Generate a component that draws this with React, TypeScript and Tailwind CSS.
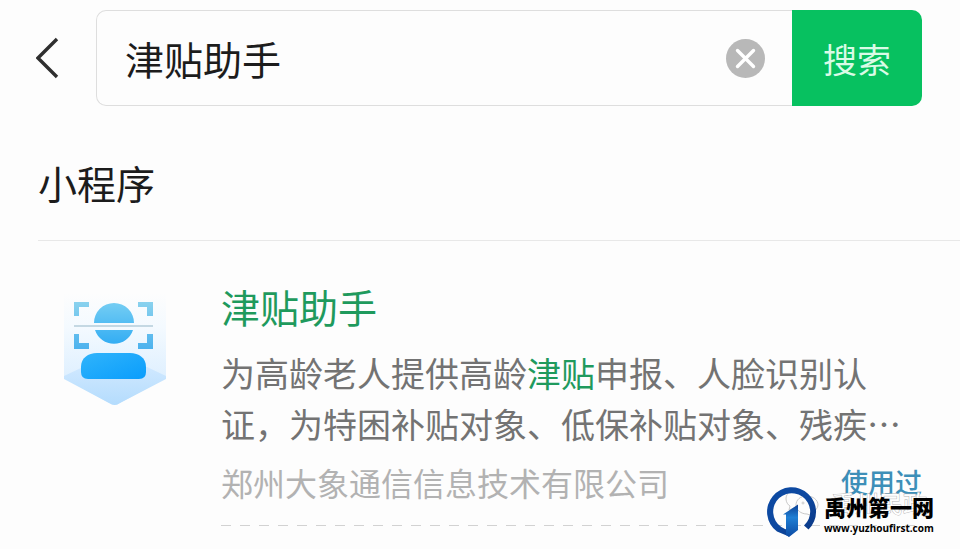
const SearchBar = () => {
  return (
    <form className="flex items-center pl-[36px] pr-[38px] pt-[10px]" onSubmit={(e) => e.preventDefault()}>
      <button type="button" aria-label="返回" className="w-[60px] shrink-0">
        <svg width="24" height="42" viewBox="0 0 24 42" fill="none" stroke="#2f2f2f" strokeWidth="3.4">
          <path d="M21 2 L2 21 L21 40" />
        </svg>
      </button>
      <div className="flex h-24 min-w-0 flex-1 items-center rounded-l-[10px] border border-r-0 border-[#dedede] pl-7 pr-[27px]">
        <input
          type="text"
          aria-label="搜索内容"
          defaultValue="津贴助手"
          className="h-16 min-w-0 flex-1 bg-transparent text-[39px] text-[#1c1c1c] outline-none"
        />
        <button type="button" aria-label="清除" className="shrink-0">
          <svg width="39" height="39" viewBox="0 0 39 39">
            <circle cx="19.5" cy="19.5" r="19.5" fill="#b8b8b8" />
            <path d="M11.5 11.5 L27.5 27.5 M27.5 11.5 L11.5 27.5" stroke="#fff" strokeWidth="3.4" strokeLinecap="round" />
          </svg>
        </button>
      </div>
      <button type="submit" className="h-24 w-[130px] shrink-0 rounded-r-[10px] bg-[#07c160] text-[34px] text-[#d9fbe6]">
        搜索
      </button>
    </form>
  );
};

const FaceScanIcon = () => (
  <svg width="104" height="114" viewBox="0 0 104 114" className="shrink-0" aria-hidden="true">
    <defs>
      <linearGradient id="panel" x1="0" y1="0" x2="0" y2="1">
        <stop offset="0" stopColor="#fdfdfd" />
        <stop offset="0.3" stopColor="#f4faff" />
        <stop offset="1" stopColor="#d3eafe" />
      </linearGradient>
      <linearGradient id="base" x1="0" y1="0" x2="0" y2="1">
        <stop offset="0" stopColor="#cfe8ff" />
        <stop offset="1" stopColor="#b4dcfd" />
      </linearGradient>
      <linearGradient id="head" x1="0" y1="0" x2="0" y2="1">
        <stop offset="0" stopColor="#74cdf3" />
        <stop offset="1" stopColor="#33adf3" />
      </linearGradient>
      <linearGradient id="corner" gradientUnits="userSpaceOnUse" x1="0" y1="9" x2="0" y2="56">
        <stop offset="0" stopColor="#8ad2ee" />
        <stop offset="1" stopColor="#4cb2ee" />
      </linearGradient>
      <linearGradient id="body" x1="0" y1="0" x2="1" y2="1">
        <stop offset="0" stopColor="#30b4fb" />
        <stop offset="1" stopColor="#0a9dfc" />
      </linearGradient>
    </defs>
    <path d="M1 0 H103 V85 L55 111 Q52 113 48 111 L1 85 Z" fill="url(#panel)" />
    <path d="M1 83 L20 74 H84 L103 83 L103 86 L57 110 Q52 114 46 110 L1 86 Z" fill="url(#base)" />
    <path d="M11 23 V9 H26 V14 H16 V23 Z M75 9 H90 V23 H84 V14 H75 Z M11 41 H16 V50 H26 V56 H11 Z M84 41 H90 V56 H75 V50 H84 Z" fill="url(#corner)" />
    <path d="M31 30 A20 20 0 0 1 71 30 Z M32 37 H70 A20 20 0 0 1 32 37 Z" fill="url(#head)" />
    <path d="M11 33 H90" stroke="#b5cdda" strokeWidth="1.5" />
    <path d="M18 74 C18 65 25 60 34 60 H67 C76 60 83 65 83 74 V79 Q83 86 76 86 H25 Q18 86 18 79 Z" fill="url(#body)" />
  </svg>
);

const SiteMark = () => (
  <div className="absolute right-[26px] top-[487px] flex items-center gap-[7px]">
    <svg width="50" height="50" viewBox="0 0 50 50" aria-hidden="true">
      <defs>
        <linearGradient id="ring" x1="0" y1="0" x2="1" y2="1">
          <stop offset="0" stopColor="#0c4aa3" />
          <stop offset="0.5" stopColor="#0d48a0" />
          <stop offset="1" stopColor="#0a3580" />
        </linearGradient>
        <linearGradient id="arrow" x1="0" y1="0" x2="0" y2="1">
          <stop offset="0" stopColor="#0b3f94" />
          <stop offset="0.4" stopColor="#1f7fd4" />
          <stop offset="1" stopColor="#0c4aa3" />
        </linearGradient>
      </defs>
      <path d="M41.5 42.5 A24.5 24.5 0 1 0 10 44.5 L22 49.5 V43 A18.5 18.5 0 1 1 37 38.5 Z" fill="url(#ring)" />
      <path d="M16 27.5 L31 17.5 V43 L22 50 L19 48 V27.5 Z" fill="url(#arrow)" />
    </svg>
    <div className="flex flex-col text-black">
      <span className="text-[22px] font-black leading-8">禹州第一网</span>
      <span className="font-['Open_Sans',sans-serif] text-[10px] font-bold leading-3">www.yuzhoufirst.com</span>
    </div>
  </div>
);

// faint account mark under the site logo
const AccountMark = () => (
  <div className="absolute right-[33px] top-[488px] flex items-center gap-3" aria-hidden="true">
    <svg width="34" height="30" viewBox="0 0 34 30" fill="#fdfdfd" stroke="#c9c9c9">
      <path d="M13 1 C6 1 1 5 1 11 C1 14 3 17 5 18 L4 22 L9 20 H14" />
      <path d="M22 8 C15 8 11 12 11 17 C11 22 16 26 22 26 L28 28 L27 25 C30 23 33 20 33 17 C33 12 28 8 22 8 Z" />
      <circle cx="18" cy="15" r="1" />
      <circle cx="26" cy="15" r="1" />
    </svg>
    <span className="text-[24px] leading-[30px] text-white [-webkit-text-stroke:1px_#b5b5b5] [paint-order:stroke]">禹州民政</span>
  </div>
);

const App = () => {
  return (
    <main lang="zh-CN" className="relative min-h-screen overflow-hidden bg-[#fdfdfd] font-['Noto_Sans_CJK_SC',sans-serif]">
      <SearchBar />

      <h2 className="ml-[38px] mt-[46px] text-[39px] leading-[60px] text-[#1c1c1c]">小程序</h2>
      <hr className="ml-[38px] mt-7 border-[#e8e8e8]" />

      <article className="flex gap-[54px] pl-[63px] pt-9">
        <div className="pt-4">
          <FaceScanIcon />
        </div>
        <div className="min-w-0 flex-1">
          <h3 className="text-[39px] leading-[58px] text-[#1f9a5d]">津贴助手</h3>
          <p className="mt-3 line-clamp-2 max-w-[690px] text-[34px] leading-[51px] text-[#737373]">
            为高龄老人提供高龄<em className="not-italic text-[#1f9a5d]">津贴</em>申报、人脸识别认证，为特困补贴对象、低保补贴对象、残疾…
          </p>
          <div className="mt-2 flex items-center justify-between pr-[38px]">
            <span className="text-[32px] leading-[50px] text-[#b2b2b2]">郑州大象通信信息技术有限公司</span>
            <span className="text-[27px] font-medium leading-[50px] text-[#3d8fb8]">使用过</span>
          </div>
          <svg className="mt-[18px] h-px w-full" aria-hidden="true">
            <path d="M0 0.5 H700" stroke="#d2d2d2" strokeDasharray="10 9" />
          </svg>
        </div>
      </article>

      <AccountMark />
      <SiteMark />
    </main>
  );
};

export default App;
